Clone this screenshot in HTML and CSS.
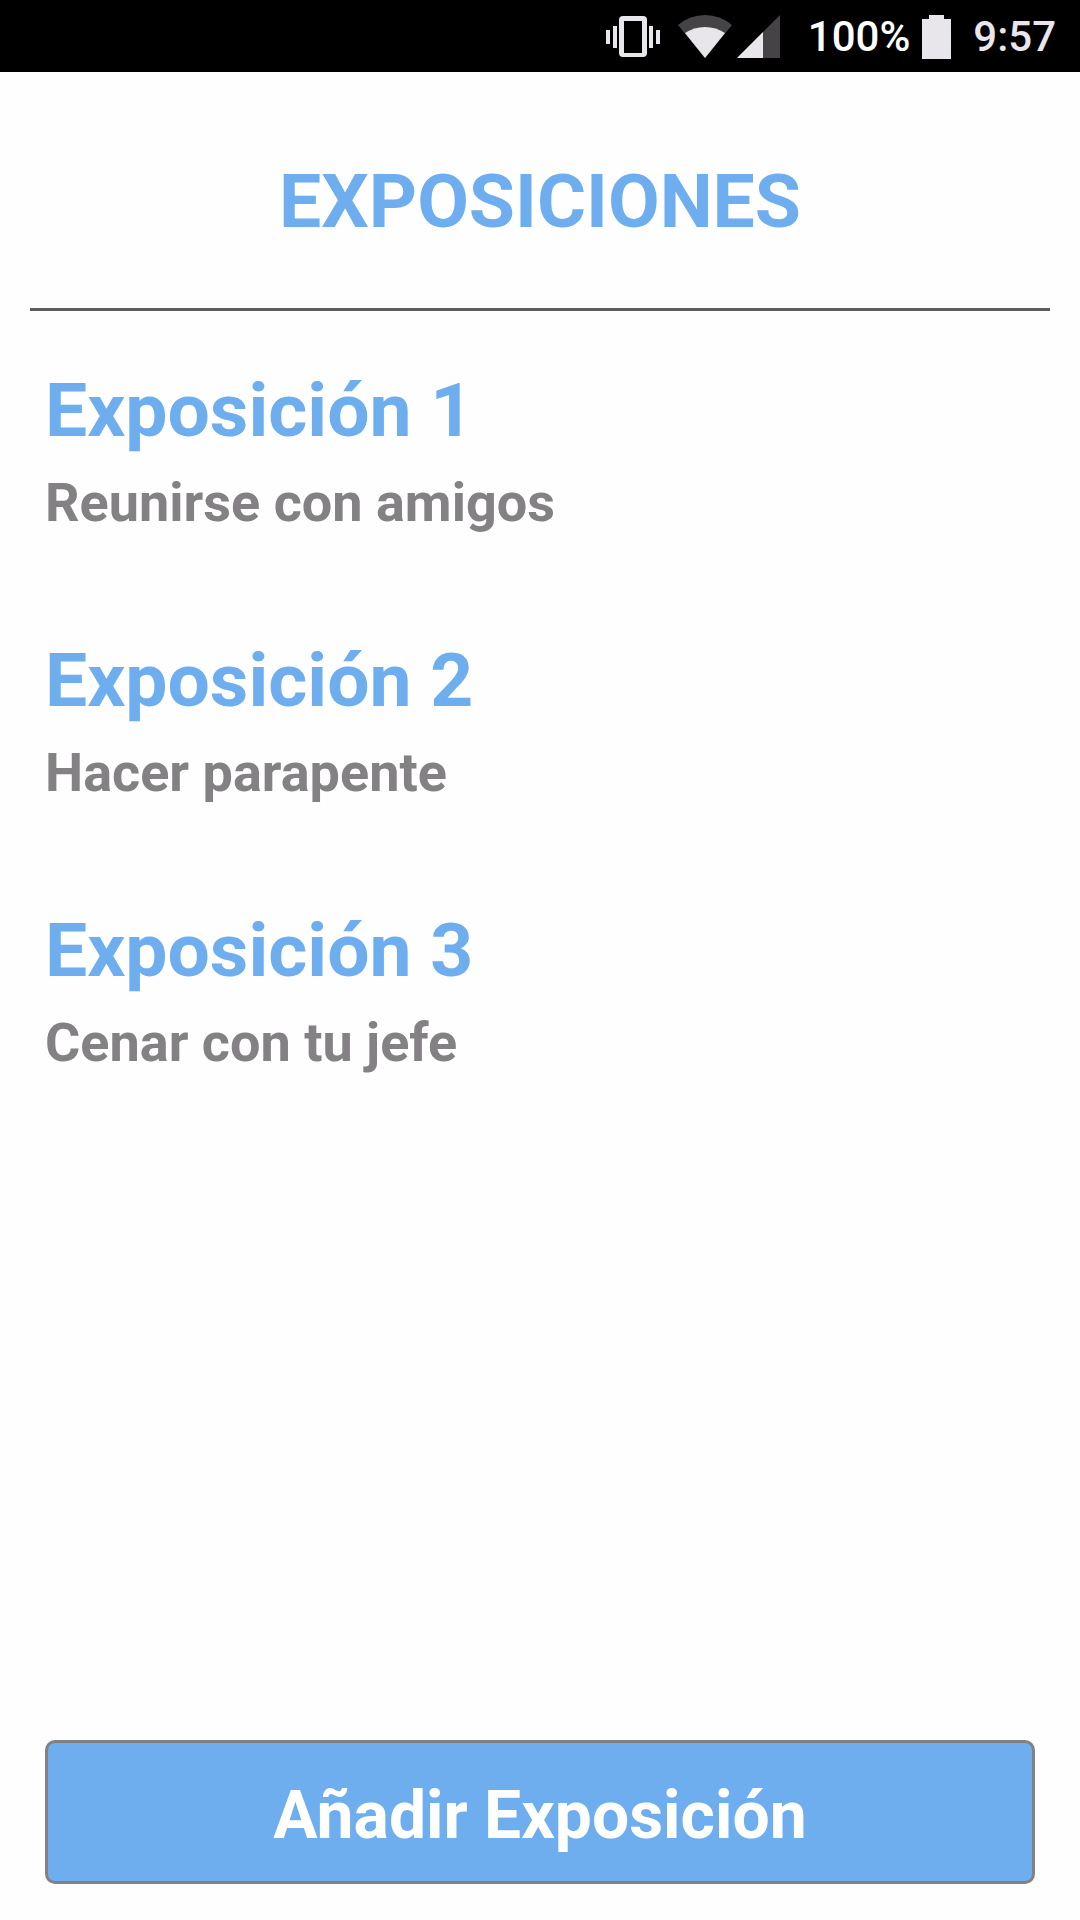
FILE: index.html
```html
<!DOCTYPE html>
<html lang="es">
<head>
    <meta charset="UTF-8">
    <meta name="viewport" content="width=device-width, initial-scale=1.0">
    <title>Exposiciones</title>
    <link rel="stylesheet" href="styles.css">
</head>
<body>
    <div class="status-bar">
        <svg class="icon-vibrate" width="54" height="44" viewBox="0 0 54 44" aria-hidden="true">
            <rect x="0" y="15" width="4" height="14"/>
            <rect x="7" y="11" width="4" height="22"/>
            <rect x="43" y="11" width="4" height="22"/>
            <rect x="50" y="15" width="4" height="14"/>
            <path fill-rule="evenodd" d="M17 1h20q4 0 4 4v33q0 4-4 4H17q-4 0-4-4V5q0-4 4-4zM18 6v32h18V6z"/>
        </svg>
        <svg class="icon-wifi" width="54" height="44" viewBox="0 0 54 44" aria-hidden="true">
            <path class="dim" d="M0 10Q12 0 27 0T54 10L27 43z"/>
            <path d="M7 18Q16 12 27 12T47 18L27 43z"/>
        </svg>
        <svg class="icon-signal" width="43" height="44" viewBox="0 0 43 44" aria-hidden="true">
            <path class="dim" d="M0 43L43 0V43z"/>
            <path d="M0 43L26 17V43z"/>
        </svg>
        <span class="battery-text">100%</span>
        <svg class="icon-battery" width="29" height="44" viewBox="0 0 29 44" aria-hidden="true">
            <path d="M7 0h15v4h7v40H0V4h7z"/>
        </svg>
        <span class="clock">9:57</span>
    </div>

    <header class="header">
        <h1>EXPOSICIONES</h1>
    </header>

    <main class="list">
        <div class="item">
            <h2>Exposición 1</h2>
            <p>Reunirse con amigos</p>
        </div>
        <div class="item">
            <h2>Exposición 2</h2>
            <p>Hacer parapente</p>
        </div>
        <div class="item">
            <h2>Exposición 3</h2>
            <p>Cenar con tu jefe</p>
        </div>
    </main>

    <footer class="footer">
        <button type="button" class="add-button">Añadir Exposición</button>
    </footer>
</body>
</html>
```
FILE: styles.css
```css
* {
    padding: 0;
    margin: 0;
    box-sizing: border-box;
}
body {
    display: flex;
    flex-direction: column;
    min-height: 100vh;
    background-color: #fefefe;
    font-family: Roboto, "Liberation Sans", sans-serif;
}
.status-bar {
    display: flex;
    align-items: center;
    justify-content: flex-end;
    height: 72px;
    padding-top: 1px;
    padding-right: 24px;
    background-color: #000;
    color: #e8e6ea;
    font-size: 42px;
    font-weight: 500;
}
.status-bar svg {
    fill: #e8e6ea;
}
.status-bar .dim {
    fill: #454346;
}
.icon-vibrate {
    margin-right: 18px;
}
.icon-wifi {
    margin-right: 5px;
}
.icon-signal {
    margin-right: 28px;
}
.battery-text {
    margin-right: 12px;
    color: #fff;
}
.icon-battery {
    margin-right: 22px;
}
.header {
    margin: 0 30px;
    padding: 85px 0 63px;
    border-bottom: 3px solid #5f5b5f;
    text-align: center;
}
h1,
h2 {
    color: #6eaeee;
    font-size: 75px;
    font-weight: bold;
    line-height: 88px;
}
.list {
    display: flex;
    flex-direction: column;
    flex: 1;
    gap: 102px;
    padding: 55px 45px;
}
.item {
    display: flex;
    flex-direction: column;
    gap: 17px;
}
.item p {
    color: #848184;
    font-size: 54px;
    font-weight: bold;
    line-height: 63px;
}
.footer {
    padding: 0 45px 36px;
}
.add-button {
    width: 100%;
    height: 144px;
    padding-top: 6px;
    border: 3px solid #848184;
    border-radius: 10px;
    background-color: #6eaeee;
    color: #fff;
    font-family: inherit;
    font-size: 66px;
    font-weight: bold;
}
```
